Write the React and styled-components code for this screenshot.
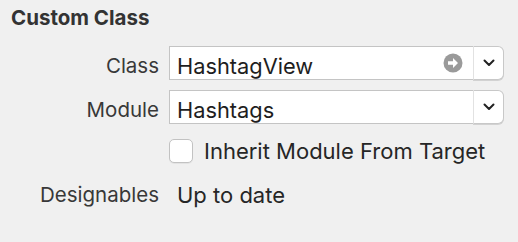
import React from "react";
import styled, { createGlobalStyle } from "styled-components";

const Global = createGlobalStyle`
  html, body { margin: 0; padding: 0; background: #f0f0f0; }
  body { font-family: Inter, "Liberation Sans", sans-serif; color: #262626; }
`;

const Panel = styled.div`
  width: 518px;
  height: 242px;
  box-sizing: border-box;
  padding: 5px 14px 0 11px;
  background: #f0f0f0;
`;

const Title = styled.h2`
  margin: 0;
  font-size: 20.5px;
  line-height: 26px;
  font-weight: 700;
  color: #333;
`;

const Form = styled.div`
  margin-top: 15px;
  display: grid;
  grid-template-columns: 148px 1fr;
  column-gap: 10px;
  row-gap: 10px;
  align-items: center;
`;

const Label = styled.div`
  text-align: right;
  font-size: 20.5px;
  color: #383838;
  line-height: ${(p) => (p.$low ? "28px" : "34px")};
  padding-top: ${(p) => (p.$low ? "6px" : "0")};
`;

const Combo = styled.div`
  display: flex;
  height: 34px;
  box-sizing: border-box;
`;

const Field = styled.div`
  flex: 1;
  display: flex;
  align-items: center;
  justify-content: space-between;
  background: #fff;
  border: 1px solid #c4c4c4;
  border-right: none;
  padding: 0 10px 0 7px;
  font-size: 21.8px;
  color: #1e1e1e;
`;

const FieldText = styled.span`
  padding-top: 6px;
`;

const Popup = styled.div`
  width: 29px;
  display: flex;
  align-items: center;
  justify-content: center;
  background: #fff;
  border: 1px solid #c8c8c8;
  border-left: 1px solid #e2e2e2;
  border-radius: 0 6px 6px 0;
  box-shadow: 0 1px 0 rgba(0,0,0,0.12);
`;

const CheckRow = styled.label`
  display: flex;
  align-items: center;
  gap: 11px;
  font-size: 22px;
  color: #262626;
  height: 34px;
`;

const Box = styled.span`
  box-sizing: border-box;
  width: 24px;
  height: 24px;
  border: 1px solid #c2c2c2;
  border-radius: 5px;
  background: #fff;
  box-shadow: 0 1px 0 rgba(0,0,0,0.05);
`;

const Value = styled.div`
  font-size: 22px;
  line-height: 34px;
  padding-left: 8px;
  color: #262626;
`;

const Chevron = () => (
  <svg width="12" height="8" viewBox="0 0 12 8">
    <path d="M1.5 1.5 L6 6 L10.5 1.5" fill="none" stroke="#222" strokeWidth="2" strokeLinecap="round" strokeLinejoin="round" />
  </svg>
);

const GoArrow = () => (
  <svg width="20" height="20" viewBox="0 0 20 20">
    <circle cx="10" cy="10" r="9.5" fill="#9a9a9a" />
    <path d="M5 8.3 H10 V5 L15 10 L10 15 V11.7 H5 Z" fill="#fff" />
  </svg>
);

export default function App() {
  return (
    <Panel>
      <Global />
      <Title>Custom Class</Title>
      <Form>
        <Label $low>Class</Label>
        <Combo>
          <Field><FieldText>HashtagView</FieldText><GoArrow /></Field>
          <Popup><Chevron /></Popup>
        </Combo>
        <Label $low>Module</Label>
        <Combo>
          <Field><FieldText>Hashtags</FieldText></Field>
          <Popup><Chevron /></Popup>
        </Combo>
        <span />
        <CheckRow><Box />Inherit Module From Target</CheckRow>
        <Label>Designables</Label>
        <Value>Up to date</Value>
      </Form>
    </Panel>
  );
}
